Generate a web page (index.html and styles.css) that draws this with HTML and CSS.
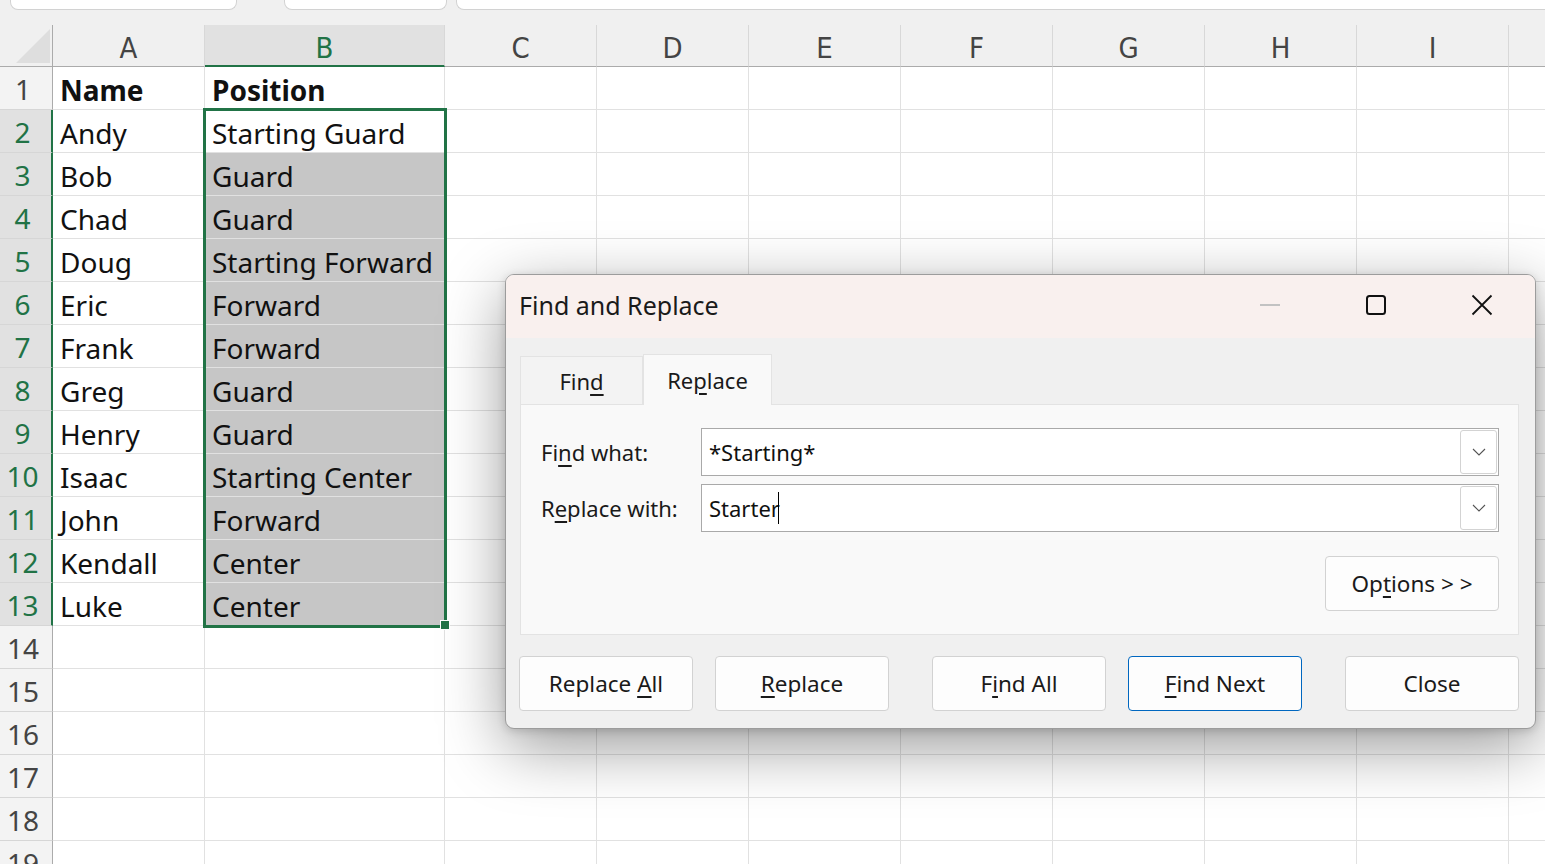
FILE: index.html
```html
<!DOCTYPE html>
<html>
    <head>
        <title>Book1 - Excel</title>
        <meta charset="UTF-8">
        <meta name="viewport" content="width=device-width, initial-scale=1">
        <link rel="stylesheet" href="styles.css">
    </head>
    <body>

        <div id="formula-bar">
            <div class="fbox namebox"></div>
            <div class="fbox fxbox"></div>
            <div class="fbox formula"></div>
        </div>

        <div id="sheet">
            <div class="row head">
                <div class="rh corner"><span class="tri"></span></div>
                <div class="cell a">A</div>
                <div class="cell b">B</div>
                <div class="rest"><span>C</span><span>D</span><span>E</span><span>F</span><span>G</span><span>H</span><span>I</span><span></span></div>
            </div>
            <div class="row"><div class="rh">1</div><div class="cell a bold">Name</div><div class="cell b bold">Position</div><div class="rest"></div></div>
            <div class="row on"><div class="rh">2</div><div class="cell a">Andy</div><div class="cell b">Starting Guard</div><div class="rest"></div></div>
            <div class="row on"><div class="rh">3</div><div class="cell a">Bob</div><div class="cell b shade">Guard</div><div class="rest"></div></div>
            <div class="row on"><div class="rh">4</div><div class="cell a">Chad</div><div class="cell b shade">Guard</div><div class="rest"></div></div>
            <div class="row on"><div class="rh">5</div><div class="cell a">Doug</div><div class="cell b shade">Starting Forward</div><div class="rest"></div></div>
            <div class="row on"><div class="rh">6</div><div class="cell a">Eric</div><div class="cell b shade">Forward</div><div class="rest"></div></div>
            <div class="row on"><div class="rh">7</div><div class="cell a">Frank</div><div class="cell b shade">Forward</div><div class="rest"></div></div>
            <div class="row on"><div class="rh">8</div><div class="cell a">Greg</div><div class="cell b shade">Guard</div><div class="rest"></div></div>
            <div class="row on"><div class="rh">9</div><div class="cell a">Henry</div><div class="cell b shade">Guard</div><div class="rest"></div></div>
            <div class="row on"><div class="rh">10</div><div class="cell a">Isaac</div><div class="cell b shade">Starting Center</div><div class="rest"></div></div>
            <div class="row on"><div class="rh">11</div><div class="cell a">John</div><div class="cell b shade">Forward</div><div class="rest"></div></div>
            <div class="row on"><div class="rh">12</div><div class="cell a">Kendall</div><div class="cell b shade">Center</div><div class="rest"></div></div>
            <div class="row on"><div class="rh">13</div><div class="cell a">Luke</div><div class="cell b shade">Center</div><div class="rest"></div></div>
            <div class="row"><div class="rh">14</div><div class="cell a"></div><div class="cell b"></div><div class="rest"></div></div>
            <div class="row"><div class="rh">15</div><div class="cell a"></div><div class="cell b"></div><div class="rest"></div></div>
            <div class="row"><div class="rh">16</div><div class="cell a"></div><div class="cell b"></div><div class="rest"></div></div>
            <div class="row"><div class="rh">17</div><div class="cell a"></div><div class="cell b"></div><div class="rest"></div></div>
            <div class="row"><div class="rh">18</div><div class="cell a"></div><div class="cell b"></div><div class="rest"></div></div>
            <div class="row"><div class="rh">19</div><div class="cell a"></div><div class="cell b"></div><div class="rest"></div></div>

            <!-- B2:B13 selection outline -->
            <div id="selection"><span class="handle"></span></div>
        </div>

        <div id="find-replace" class="dialog">
            <div class="titlebar">
                <span class="title">Find and Replace</span>
                <div class="controls">
                    <span class="ctl">
                        <svg width="22" height="22" viewBox="0 0 22 22"><line x1="1" y1="11" x2="21" y2="11" stroke="#c2c2c2" stroke-width="2"/></svg>
                    </span>
                    <span class="ctl">
                        <svg width="22" height="22" viewBox="0 0 22 22"><rect x="2" y="2" width="18" height="18" rx="2.5" fill="none" stroke="#111" stroke-width="2"/></svg>
                    </span>
                    <span class="ctl">
                        <svg width="22" height="22" viewBox="0 0 22 22"><path d="M1.5 1.5 L20.5 20.5 M20.5 1.5 L1.5 20.5" stroke="#111" stroke-width="1.8" fill="none"/></svg>
                    </span>
                </div>
            </div>
            <div class="dlg-body">
                <div class="tabs">
                    <div class="tab">Fin<u>d</u></div>
                    <div class="tab active">Re<u>p</u>lace</div>
                </div>
                <div class="panel">
                    <div class="field">
                        <label>Fi<u>n</u>d what:</label>
                        <div class="combo">
                            <span>*Starting*</span>
                            <span class="drop"><svg width="14" height="8" viewBox="0 0 14 8"><path d="M1 1 L7 7 L13 1" fill="none" stroke="#555" stroke-width="1.1"/></svg></span>
                        </div>
                    </div>
                    <div class="field">
                        <label>R<u>e</u>place with:</label>
                        <div class="combo">
                            <span>Starter</span><span class="caret"></span>
                            <span class="drop"><svg width="14" height="8" viewBox="0 0 14 8"><path d="M1 1 L7 7 L13 1" fill="none" stroke="#555" stroke-width="1.1"/></svg></span>
                        </div>
                    </div>
                    <div class="options-row">
                        <button class="btn">Op<u>t</u>ions &gt; &gt;</button>
                    </div>
                </div>
                <div class="actions">
                    <button class="btn">Replace <u>A</u>ll</button>
                    <button class="btn"><u>R</u>eplace</button>
                    <button class="btn far">F<u>i</u>nd All</button>
                    <button class="btn primary"><u>F</u>ind Next</button>
                    <button class="btn far">Close</button>
                </div>
            </div>
        </div>

    </body>
</html>
```

FILE: styles.css
```css
body {
    margin: 0;
    height: 864px;
    overflow: hidden;
    position: relative;
    background: #fff;
    font-family: "Noto Sans", "Open Sans", sans-serif;
    color: #111;
}

/* strip under the ribbon: name box, fx, formula input */
#formula-bar {
    display: flex;
    height: 25px;
    background: #f0f0f0;
}
.fbox {
    height: 9px;
    background: #fff;
    border: 1px solid #d2d2d2;
    border-top: none;
    border-radius: 0 0 8px 8px;
}
.namebox { margin-left: 10px; width: 225px; }
.fxbox { margin-left: 47px; width: 161px; }
.formula { margin-left: 9px; flex: 1; border-right: none; border-radius: 0 0 0 8px; }

/* grid */
#sheet { position: relative; }
.row {
    display: flex;
    height: 43px;
}
.row.head {
    height: 42px;
    background: #f0f0f0;
}
.rh {
    flex: none;
    width: 53px;
    box-sizing: border-box;
    padding-right: 6px;
    border-right: 1px solid #ababab;
    border-bottom: 1px solid #d6d6d6;
    background: #f3f3f3;
    color: #444;
    text-align: center;
    font-size: 28px;
    line-height: 43px;
    padding-top: 1px;
}
.row.on .rh {
    background: #e1e1e1;
    color: #217346;
    border-right: 2px solid #217346;
}
.cell {
    flex: none;
    box-sizing: border-box;
    padding: 2px 0 0 7px;
    border-right: 1px solid #e1e1e1;
    border-bottom: 1px solid #e1e1e1;
    font-size: 28px;
    line-height: 43px;
    white-space: nowrap;
    overflow: hidden;
}
.cell.a { width: 152px; }
.cell.b { width: 240px; }
.cell.bold { font-weight: bold; }
.cell.shade { background: #c6c6c6; }
.rest {
    flex: 1;
    border-bottom: 1px solid #e1e1e1;
    background: repeating-linear-gradient(to right, transparent 0 151px, #e1e1e1 151px 152px);
}

/* column letters */
.head .corner {
    position: relative;
    background: #f0f0f0;
    border-bottom: 1px solid #ababab;
    padding: 0;
}
.head .corner .tri {
    position: absolute;
    left: 16px;
    top: 4px;
    width: 34px;
    height: 34px;
    background: #dedede;
    clip-path: polygon(100% 0, 100% 100%, 0 100%);
}
.head .cell,
.head .rest span {
    padding: 3px 0 0;
    text-align: center;
    font-family: "Liberation Sans Narrow", "DejaVu Sans Condensed", "Roboto", sans-serif;
    font-stretch: condensed;
    font-size: 29px;
    line-height: 40px;
    color: #444;
    border-right: 1px solid #d8d8d8;
    border-bottom: 1px solid #ababab;
    background: #f0f0f0;
}
.head .cell.b {
    background: #e1e1e1;
    color: #217346;
    border-bottom: 2px solid #217346;
}
.head .rest {
    display: flex;
    background: none;
    border: none;
    overflow: hidden;
}
.head .rest span {
    flex: none;
    width: 152px;
    box-sizing: border-box;
    height: 42px;
}

#selection {
    position: absolute;
    left: 203px;
    top: 83px;
    width: 244px;
    height: 520px;
    box-sizing: border-box;
    border: 3px solid #217346;
}
#selection .handle {
    position: absolute;
    right: -5px;
    bottom: -4px;
    width: 8px;
    height: 8px;
    background: #217346;
    outline: 1px solid #fff;
}

/* dialog window */
.dialog {
    position: absolute;
    left: 505px;
    top: 274px;
    width: 1031px;
    height: 455px;
    box-sizing: border-box;
    border: 1px solid #9c9c9c;
    border-radius: 9px;
    background: #f0f0f0;
    overflow: hidden;
    box-shadow: 0 18px 64px rgba(0, 0, 0, 0.4), 0 2px 8px rgba(0, 0, 0, 0.15);
    color: #1a1a1a;
}
.titlebar {
    display: flex;
    align-items: center;
    height: 63px;
    box-sizing: border-box;
    padding-bottom: 3px;
    background: #f9f0ee;
}
.title {
    padding-left: 13px;
    font-size: 25px;
}
.controls {
    margin-left: auto;
    display: flex;
}
.ctl {
    width: 106px;
    height: 60px;
    display: flex;
    align-items: center;
    justify-content: center;
}

.dlg-body {
    padding: 16px 16px 0 14px;
}
.tabs {
    display: flex;
    align-items: flex-end;
    height: 50px;
}
.tab {
    box-sizing: border-box;
    width: 123px;
    height: 48px;
    display: flex;
    align-items: center;
    justify-content: center;
    border: 1px solid #e3e3e3;
    border-bottom: none;
    background: #f3f3f3;
    font-size: 22px;
}
.tab.active {
    width: 129px;
    height: 51px;
    margin-bottom: -1px;
    background: #f9f9f9;
    position: relative;
}
u {
    text-decoration-thickness: 2px;
    text-underline-offset: 4px;
}

.panel {
    box-sizing: border-box;
    height: 231px;
    padding: 23px 19px 0 20px;
    border: 1px solid #e3e3e3;
    background: #f9f9f9;
}
.field {
    display: flex;
    align-items: center;
    height: 48px;
    margin-bottom: 8px;
}
.field label {
    flex: none;
    width: 160px;
    font-size: 22px;
}
.combo {
    flex: 1;
    height: 48px;
    box-sizing: border-box;
    display: flex;
    align-items: center;
    padding-left: 7px;
    border: 1px solid #a9a9a9;
    background: #fff;
    font-size: 22px;
    color: #111;
}
.caret {
    width: 1px;
    height: 32px;
    margin-left: -2px;
    background: #000;
}
.drop {
    margin-left: auto;
    margin-right: 1px;
    width: 37px;
    height: 44px;
    box-sizing: border-box;
    display: flex;
    align-items: center;
    justify-content: center;
    border: 1px solid #d3d3d3;
    border-radius: 3px;
}
.options-row {
    display: flex;
    justify-content: flex-end;
    margin-top: 24px;
}

.btn {
    width: 174px;
    height: 55px;
    box-sizing: border-box;
    border: 1px solid #d2d2d2;
    border-radius: 4px;
    background: #fdfdfd;
    font-family: inherit;
    font-size: 22.5px;
    color: #1a1a1a;
    padding: 0;
}
.btn.primary { border-color: #0067c0; }
.actions {
    display: flex;
    margin-top: 21px;
    margin-left: -1px;
}
.actions .btn + .btn { margin-left: 22px; }
.actions .btn.far { margin-left: 43px; }
```
